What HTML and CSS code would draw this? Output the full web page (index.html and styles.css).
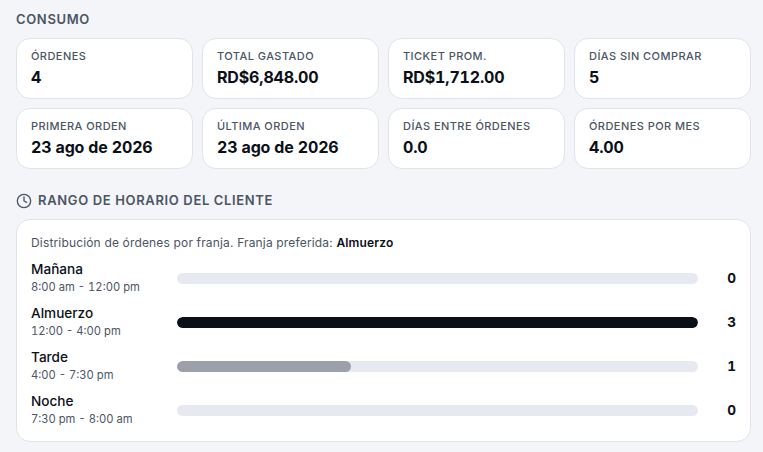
FILE: index.html
```html
<!DOCTYPE html>
<html lang="es">
<head>
    <meta charset="UTF-8">
    <meta name="viewport" content="width=device-width, initial-scale=1.0">
    <title>Consumo</title>
    <link rel="stylesheet" href="styles.css">
</head>
<body>

    <h2 class="section-title">CONSUMO</h2>

    <div class="stats">
        <div class="stat"><div class="stat-label">ÓRDENES</div><div class="stat-value">4</div></div>
        <div class="stat"><div class="stat-label">TOTAL GASTADO</div><div class="stat-value">RD$6,848.00</div></div>
        <div class="stat"><div class="stat-label">TICKET PROM.</div><div class="stat-value">RD$1,712.00</div></div>
        <div class="stat"><div class="stat-label">DÍAS SIN COMPRAR</div><div class="stat-value">5</div></div>
        <div class="stat"><div class="stat-label">PRIMERA ORDEN</div><div class="stat-value">23 ago de 2026</div></div>
        <div class="stat"><div class="stat-label">ÚLTIMA ORDEN</div><div class="stat-value">23 ago de 2026</div></div>
        <div class="stat"><div class="stat-label">DÍAS ENTRE ÓRDENES</div><div class="stat-value">0.0</div></div>
        <div class="stat"><div class="stat-label">ÓRDENES POR MES</div><div class="stat-value">4.00</div></div>
    </div>

    <h2 class="section-title with-icon">
        <svg class="clock" width="16" height="16" viewBox="0 0 24 24" fill="none" stroke="currentColor" stroke-width="2" stroke-linecap="round" stroke-linejoin="round">
            <circle cx="12" cy="12" r="10"></circle>
            <path d="M12 6v6l4 2"></path>
        </svg>
        RANGO DE HORARIO DEL CLIENTE
    </h2>

    <div class="panel">
        <p class="panel-note">Distribución de órdenes por franja. Franja preferida: <strong>Almuerzo</strong></p>

        <div class="slot">
            <div class="slot-name"><div class="slot-title">Mañana</div><div class="slot-time">8:00 am - 12:00 pm</div></div>
            <div class="track"><div class="fill" style="width: 0%"></div></div>
            <div class="slot-count">0</div>
        </div>
        <div class="slot">
            <div class="slot-name"><div class="slot-title">Almuerzo</div><div class="slot-time">12:00 - 4:00 pm</div></div>
            <div class="track"><div class="fill top" style="width: 100%"></div></div>
            <div class="slot-count">3</div>
        </div>
        <div class="slot">
            <div class="slot-name"><div class="slot-title">Tarde</div><div class="slot-time">4:00 - 7:30 pm</div></div>
            <div class="track"><div class="fill" style="width: 33.33%"></div></div>
            <div class="slot-count">1</div>
        </div>
        <div class="slot">
            <div class="slot-name"><div class="slot-title">Noche</div><div class="slot-time">7:30 pm - 8:00 am</div></div>
            <div class="track"><div class="fill" style="width: 0%"></div></div>
            <div class="slot-count">0</div>
        </div>
    </div>

</body>
</html>
```

FILE: styles.css
```css
html, body {
    height: 452px;
    overflow: hidden;
}

body {
    font-family: Inter, sans-serif;
    background-color: #f3f5f9;
    color: #0b1018;
    margin: 0;
    padding: 11px 12px 0 16px;
}

.section-title {
    margin: 0 0 10px;
    font-size: 13px;
    line-height: 17px;
    font-weight: 600;
    letter-spacing: 0.65px;
    color: #4b5563;
}

.section-title.with-icon {
    display: flex;
    align-items: center;
    gap: 6px;
    margin-bottom: 10px;
    padding-top: 1px;
}

.clock {
    flex: none;
    width: 16px;
    height: 16px;
}

.stats {
    display: grid;
    grid-template-columns: repeat(4, 1fr);
    gap: 9px;
    margin-bottom: 22px;
}

.stat {
    background-color: #fff;
    border: 1px solid #e0e3eb;
    border-radius: 14px;
    padding: 9px 14px 9px;
    height: 61px;
    box-sizing: border-box;
}

.stat-label {
    font-size: 11px;
    line-height: 16px;
    font-weight: 500;
    letter-spacing: 0.44px;
    color: #4b5563;
}

.stat-value {
    margin-top: 1px;
    font-size: 16px;
    line-height: 24px;
    font-weight: 700;
    letter-spacing: -0.16px;
    font-variant-numeric: tabular-nums;
    color: #0b1018;
}

.panel {
    background-color: #fff;
    border: 1px solid #e0e3eb;
    border-radius: 14px;
    padding: 15px 14px 9px;
}

.panel-note {
    margin: 0 0 5px;
    font-size: 12px;
    line-height: 16px;
    letter-spacing: 0.16px;
    color: #4b5563;
}

.panel-note strong {
    font-weight: 600;
    color: #0b1018;
}

.slot {
    display: flex;
    align-items: center;
    height: 44px;
}

.slot-name {
    width: 146px;
    flex: none;
}

.slot-title {
    font-size: 13.6px;
    line-height: 18px;
    font-weight: 500;
    color: #0b1018;
}

.slot-time {
    margin-top: 1px;
    font-size: 11.2px;
    line-height: 17px;
    font-variant-numeric: tabular-nums;
    color: #4b5563;
}

.track {
    flex: 1;
    height: 11px;
    background-color: #e6eaf0;
    border-radius: 6px;
    overflow: hidden;
}

.fill {
    height: 100%;
    background-color: #9ca0ab;
    border-radius: 6px;
}

.fill.top {
    background-color: #0b1018;
}

.slot-count {
    width: 38px;
    flex: none;
    text-align: right;
    font-size: 13.6px;
    font-weight: 700;
    font-variant-numeric: tabular-nums;
    color: #0b1018;
}
```
